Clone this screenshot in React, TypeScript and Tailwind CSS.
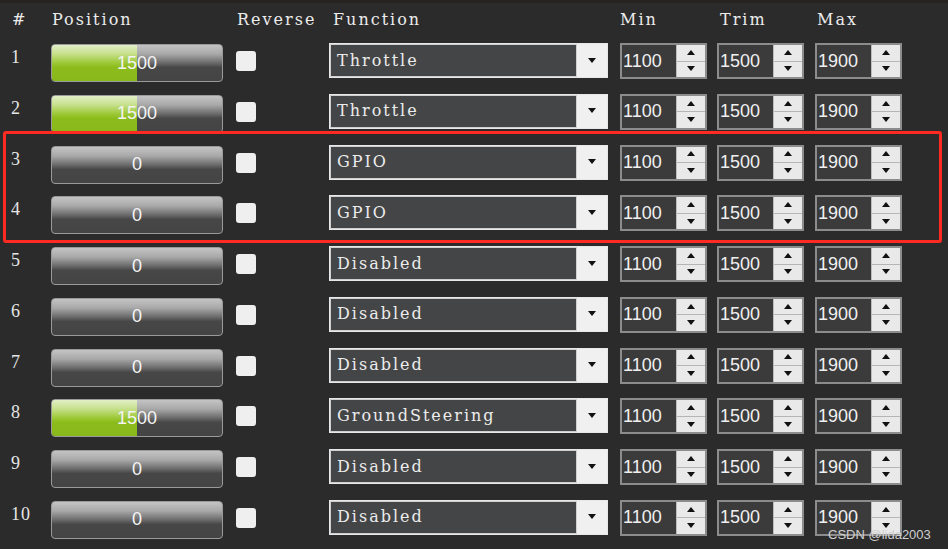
import React from "react";

type Row = { n: number; pos: number; fn: string };

const rows: Row[] = [
  { n: 1, pos: 1500, fn: "Throttle" },
  { n: 2, pos: 1500, fn: "Throttle" },
  { n: 3, pos: 0, fn: "GPIO" },
  { n: 4, pos: 0, fn: "GPIO" },
  { n: 5, pos: 0, fn: "Disabled" },
  { n: 6, pos: 0, fn: "Disabled" },
  { n: 7, pos: 0, fn: "Disabled" },
  { n: 8, pos: 1500, fn: "GroundSteering" },
  { n: 9, pos: 0, fn: "Disabled" },
  { n: 10, pos: 0, fn: "Disabled" },
];

const serif = { fontFamily: '"DejaVu Serif", "Liberation Serif", serif' };
const lserif = { fontFamily: '"Liberation Serif", serif' };
const sans = { fontFamily: '"Liberation Sans", Arial, sans-serif' };

function Bar({ value }: { value: number }) {
  const pct = value > 0 ? ((value - 1000) / 1000) * 100 : 0;
  return (
    <div className="relative mt-[1px] h-[38px] w-[172px] overflow-hidden rounded-[4px] border border-[#9a9a9a] bg-[linear-gradient(to_bottom,#c4c4c4_0%,#a8a8a8_25%,#6a6a6a_50%,#474747_62%,#444444_100%)]">
      {pct > 0 && (
        <div
          className="absolute left-0 top-0 h-full bg-[linear-gradient(to_bottom,#e2efc8_0%,#c6e08a_25%,#9cc836_50%,#8cbc1c_62%,#88b81a_100%)]"
          style={{ width: `${pct}%` }}
        />
      )}
      <div className="relative flex h-full items-center justify-center text-[18px] text-[#f4f4f4]" style={sans}>
        {value}
      </div>
    </div>
  );
}

function Select({ label }: { label: string }) {
  return (
    <div className="flex h-[35px] w-[279px] border border-[#e8e8e8] bg-[#f0f0f0]">
      <div
        className="flex flex-1 items-center border border-[#cfcfcf] bg-[#444546] pl-[6px] text-[16px] tracking-[2px] text-[#ececec]"
        style={serif}
      >
        {label}
      </div>
      <div className="flex w-[30px] items-center justify-center">
        <svg width="10" height="6" viewBox="0 0 10 6">
          <polygon points="1,0 9,0 5,5" fill="#111" />
        </svg>
      </div>
    </div>
  );
}

function Spin({ value }: { value: number }) {
  return (
    <div className="flex h-[36px] w-[87px] border-2 border-[#8c8c8c] bg-[#3b3b3c]">
      <div className="flex flex-1 items-center pl-[1px] text-[18px] text-[#f0f0f0]" style={sans}>
        {value}
      </div>
      <div className="flex w-[29px] flex-col border-l border-[#bdbdbd] bg-[#e9e9e9]">
        <div className="flex flex-1 items-center justify-center border-b border-[#b5b5b5]">
          <svg width="10" height="6" viewBox="0 0 10 6">
            <polygon points="1,5 9,5 5,0" fill="#111" />
          </svg>
        </div>
        <div className="flex flex-1 items-center justify-center">
          <svg width="10" height="6" viewBox="0 0 10 6">
            <polygon points="1,0 9,0 5,5" fill="#111" />
          </svg>
        </div>
      </div>
    </div>
  );
}

export default function App() {
  return (
    <div className="relative h-[549px] w-[948px] overflow-hidden bg-[#2b2b2b] text-[#e6e6e6]">
      <div className="h-[3px] bg-[#262321]" />
      <div className="flex h-[40px] items-start pt-[5px] text-[16px] tracking-[2px] text-[#ececec]" style={serif}>
        <div className="w-[51px] pl-[12px]">#</div>
        <div className="w-[185px] pl-[1px]">Position</div>
        <div className="w-[95px] pl-[1px]">Reverse</div>
        <div className="w-[289px] pl-[2px]">Function</div>
        <div className="w-[99px]">Min</div>
        <div className="w-[97px] pl-[1px]">Trim</div>
        <div className="pl-[1px]">Max</div>
      </div>
      <div className="flex flex-col">
        {rows.map((r) => (
          <div key={r.n} className="flex h-[50.78px] items-start">
            <div className="w-[51px] pl-[11px] pt-[1px] text-[18px] tracking-[1px] text-[#e6e6e6]" style={lserif}>
              {r.n}
            </div>
            <Bar value={r.pos} />
            <div className="ml-[13px] mt-[8px] h-[20px] w-[20px] rounded-[3px] bg-[#efefef]" />
            <div className="ml-[73px]">
              <Select label={r.fn} />
            </div>
            <div className="ml-[12px]">
              <Spin value={1100} />
            </div>
            <div className="ml-[10px]">
              <Spin value={1500} />
            </div>
            <div className="ml-[11px]">
              <Spin value={1900} />
            </div>
          </div>
        ))}
      </div>
      <div className="pointer-events-none absolute left-[3px] top-[131px] h-[112px] w-[939px] rounded-[3px] border-[3px] border-[#ff2a22]" />
      <div className="absolute left-[828px] top-[525px] text-[13px] text-[#d0d0d0]" style={sans}>
        CSDN @lida2003
      </div>
    </div>
  );
}
